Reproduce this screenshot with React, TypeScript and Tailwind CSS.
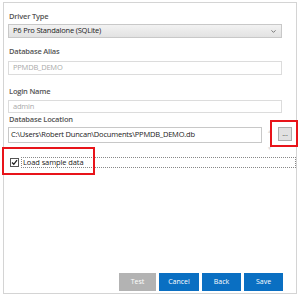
import { ChevronDown } from "lucide-react";

const font = { fontFamily: '"Open Sans", "Noto Sans", sans-serif' };

const Label = ({ text, className }: { text: string; className?: string }) => (
    <div className={`h-[10px] text-[7.5px] leading-[10px] font-semibold tracking-[-0.2px] text-[#555] ${className ?? ''}`}>{text}</div>
)

export default function App() {
    return (
        <div className="relative w-[300px] h-[296px] bg-white overflow-hidden" style={font}>
            <div className="ml-[3px] mt-[2px] w-[294px] h-[292px] border border-[#d4d4d4] flex flex-col pl-[4px]">
                <Label text="Driver Type" className="mt-[8px] ml-[1px]" />
                <div className="mt-[3px] w-[274px] h-[14px] border border-[#c8c8c8] bg-gradient-to-b from-[#f2f2f2] to-[#e2e2e2] flex items-center justify-between px-[4px]">
                    <span className="text-[7.5px] tracking-[-0.2px] text-[#222] leading-none">P6 Pro Standalone (SQLite)</span>
                    <ChevronDown size={7} strokeWidth={3} className="text-[#666]" />
                </div>
                <Label text="Database Alias" className="mt-[8px] ml-[1px]" />
                <div className="mt-[5px] w-[274px] h-[14px] border border-[#dcdcdc] flex items-center px-[4px]">
                    <span className="text-[7.5px] tracking-[-0.2px] text-[#aaa] leading-none">PPMDB_DEMO</span>
                </div>
                <Label text="Login Name" className="mt-[11px] ml-[1px]" />
                <div className="mt-[4px] w-[274px] h-[13px] border border-[#dcdcdc] flex items-center px-[4px]">
                    <span className="text-[7.5px] tracking-[-0.2px] text-[#aaa] leading-none">admin</span>
                </div>
                <Label text="Database Location" className="mt-[1px] ml-[1px]" />
                <div className="mt-[3px] flex items-start">
                    <div className="w-[254px] h-[16px] border border-[#c8c8c8] flex items-center px-[2px]">
                        <span className="text-[7.5px] tracking-[-0.2px] text-[#222] leading-none whitespace-nowrap">C:\Users\Robert Duncan\Documents\PPMDB_DEMO.db</span>
                    </div>
                    <div className="ml-[3px] w-[9px] h-[22px] mt-[2px] flex flex-col justify-between items-center text-[#ddd] text-[5px] leading-none">
                        <span>▲</span>
                        <span>▼</span>
                    </div>
                    <button className="ml-[4px] w-[14px] h-[14px] border border-[#adadad] bg-[#e1e1e1] flex items-end justify-center pb-[3px] text-[7px] leading-none text-[#333]">
                        ...
                    </button>
                </div>
                <div className="mt-[6px] flex items-center">
                    <div className="ml-[2px] w-[9px] h-[9px] border border-[#555] bg-white flex items-center justify-center">
                        <svg width="7" height="7" viewBox="0 0 7 7">
                            <path d="M1 3.5 L2.8 5.3 L6 1.2" fill="none" stroke="#222" strokeWidth="1.3" />
                        </svg>
                    </div>
                    <div className="ml-[2px] w-[276px] h-[11px] border border-dotted border-[#888] flex items-center pl-[1px]">
                        <span className="text-[7.5px] tracking-[-0.1px] text-[#222] leading-none">Load sample data</span>
                    </div>
                </div>
                <div className="flex-1" />
                <div className="mb-[2px] flex justify-end gap-[3px] pr-[13px]">
                    <button className="w-[37px] h-[18px] bg-[#b3b3b3] text-white text-[7px]">Test</button>
                    <button className="w-[40px] h-[18px] bg-[#0a6fc2] text-white text-[7px]">Cancel</button>
                    <button className="w-[39px] h-[18px] bg-[#0a6fc2] text-white text-[7px]">Back</button>
                    <button className="w-[39px] h-[18px] bg-[#0a6fc2] text-white text-[7px]">Save</button>
                </div>
            </div>
            <div className="absolute left-[270px] top-[120px] w-[28px] h-[27px] border-2 border-[#e8141a]" />
            <div className="absolute left-[2px] top-[147px] w-[93px] h-[28px] border-2 border-[#e8141a]" />
        </div>
    )
}
